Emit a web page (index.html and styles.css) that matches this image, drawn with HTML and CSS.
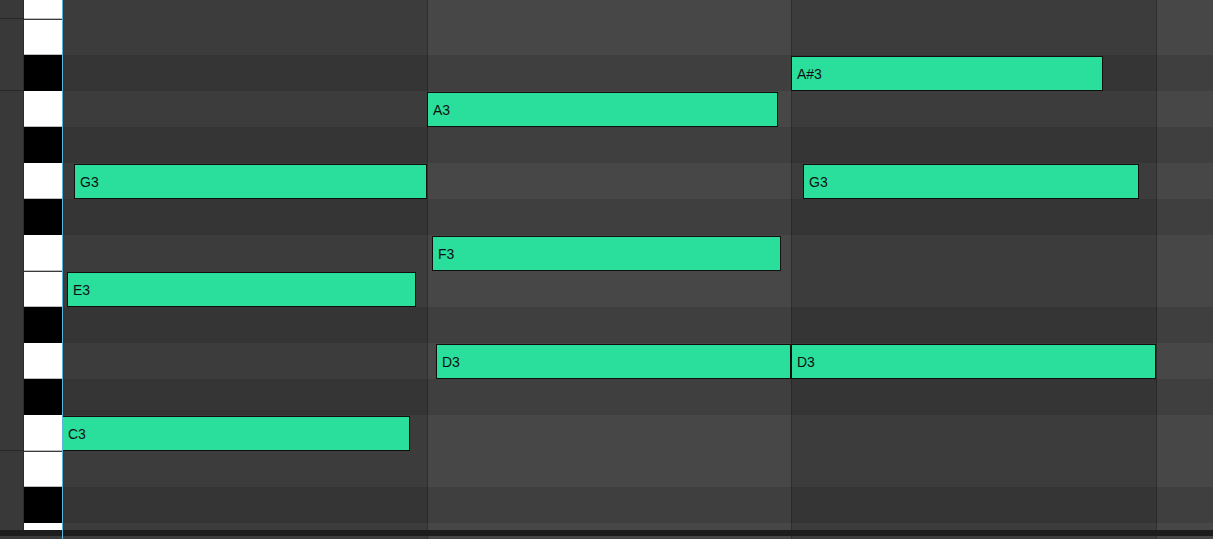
FILE: index.html
```html
<!doctype html>
<html>
  <head>
    <meta charset="UTF-8" />
    <title>Piano Roll</title>
    <link rel="stylesheet" href="styles.css">
  </head>
  <body>
    <div class="editor">
      <!-- keyboard side -->
      <div class="side">
        <div class="side-view">
          <div class="side-lanes">
            <!-- octave gutter -->
            <div class="gutter">
              <div class="gutter-seg seg-c4"></div>
              <div class="gutter-seg seg-b3"></div>
              <div class="gutter-seg seg-a3"></div>
              <div class="gutter-seg seg-b2"></div>
            </div>
            <!-- keys C4 .. A2 -->
            <div class="keys">
              <div class="key white"></div>
              <div class="key white edge"></div>
              <div class="key black"></div>
              <div class="key white"></div>
              <div class="key black"></div>
              <div class="key white"></div>
              <div class="key black"></div>
              <div class="key white"></div>
              <div class="key white edge"></div>
              <div class="key black"></div>
              <div class="key white"></div>
              <div class="key black"></div>
              <div class="key white"></div>
              <div class="key white edge"></div>
              <div class="key black"></div>
              <div class="key white"></div>
            </div>
          </div>
        </div>
        <div class="hbar"></div>
        <div class="side-foot"></div>
      </div>

      <!-- note grid -->
      <div class="main">
        <div class="bar bar-1"></div>
        <div class="bar bar-2"></div>
        <div class="bar bar-3"></div>
        <div class="bar bar-4"></div>

        <div class="viewport">
          <div class="lanes">
            <div class="rows">
              <div class="row"></div>
              <div class="row"></div>
              <div class="row dark"></div>
              <div class="row"></div>
              <div class="row dark"></div>
              <div class="row"></div>
              <div class="row dark"></div>
              <div class="row"></div>
              <div class="row"></div>
              <div class="row dark"></div>
              <div class="row"></div>
              <div class="row dark"></div>
              <div class="row"></div>
              <div class="row"></div>
              <div class="row dark"></div>
              <div class="row"></div>
            </div>
            <!-- notes: top = row * 36 + 1 -->
            <div class="notes">
              <div class="note" style="left: 728px; top: 73px; width: 312px">A#3</div>
              <div class="note" style="left: 364px; top: 109px; width: 351px">A3</div>
              <div class="note" style="left: 11px; top: 181px; width: 353px">G3</div>
              <div class="note" style="left: 740px; top: 181px; width: 336px">G3</div>
              <div class="note" style="left: 369px; top: 253px; width: 349px">F3</div>
              <div class="note" style="left: 4px; top: 289px; width: 349px">E3</div>
              <div class="note" style="left: 373px; top: 361px; width: 355px">D3</div>
              <div class="note" style="left: 728px; top: 361px; width: 365px">D3</div>
              <div class="note" style="left: -1px; top: 433px; width: 348px">C3</div>
            </div>
          </div>
        </div>
        <div class="hbar main-hbar"></div>
      </div>
    </div>
  </body>
</html>
```
FILE: styles.css
```css
body {
  margin: 0;
  width: 1213px;
  height: 539px;
  overflow: hidden;
  background-color: #3a3a3a;
  font-family: 'Liberation Sans', Arial, sans-serif;
  -webkit-font-smoothing: antialiased;
}

/* start */
.editor {
  display: flex;
  width: 100%;
  height: 100%;
}

/* keyboard side */
.side {
  width: 62px;
  display: grid;
  grid-template-rows: 530px 6px 1fr;
  border-right: 1px solid #5cb4d8;
}
.side-view {
  overflow: hidden;
}
.side-lanes {
  display: flex;
  margin-top: -17px;
}
.gutter {
  width: 24px;
  display: flex;
  flex-direction: column;
  background-color: #393939;
  box-shadow: inset -1px 0 0 #2c2c2c;
}
.gutter-seg {
  box-sizing: border-box;
  border-bottom: 1px solid #262626;
}
.gutter > .seg-c4 {
  height: 36px;
}
.gutter > .seg-b3 {
  height: 72px;
}
.gutter > .seg-a3 {
  height: 360px;
}
.gutter > .seg-b2 {
  height: 108px;
  border-bottom: none;
}
.keys {
  width: 38px;
  display: flex;
  flex-direction: column;
}
.key {
  height: 36px;
  box-sizing: border-box;
}
.keys > .white {
  background-color: #ffffff;
  box-shadow: inset 0 -1px 0 #bdbdbd;
}
.keys > .edge {
  border-top: 1px solid #3a3a3a;
}
.keys > .black {
  background-color: #000000;
}
.hbar {
  background-color: #1c1c1c;
}
.side-foot {
  background-color: #3a3a3a;
}

/* note grid */
.main {
  flex: 1;
  display: grid;
  grid-template-columns: 364px 364px 365px 1fr;
  grid-template-rows: 530px 6px 1fr;
}
.main > .bar {
  grid-row: 1 / -1;
  background-color: #3c3c3c;
}
.main > .bar-1 {
  grid-column: 1;
}
.main > .bar-2 {
  grid-column: 2;
  background-color: #474747;
  border-left: 1px solid #2e2e2e;
}
.main > .bar-3 {
  grid-column: 3;
  border-left: 1px solid #2e2e2e;
}
.main > .bar-4 {
  grid-column: 4;
  background-color: #474747;
  border-left: 1px solid #2e2e2e;
}
.main > .viewport {
  grid-row: 1;
  grid-column: 1 / -1;
  overflow: hidden;
}
.main > .main-hbar {
  grid-row: 2;
  grid-column: 1 / -1;
}
.lanes {
  position: relative;
  margin-top: -17px;
}
.rows {
  display: flex;
  flex-direction: column;
}
.rows > .row {
  height: 36px;
}
.rows > .dark {
  background-color: rgba(0, 0, 0, 0.1);
}
.note {
  position: absolute;
  height: 35px;
  box-sizing: border-box;
  display: flex;
  align-items: center;
  padding-left: 5px;
  background-color: #2ade9b;
  border: 1px solid #0f0f0f;
  color: #111111;
  font-size: 14px;
}
```
